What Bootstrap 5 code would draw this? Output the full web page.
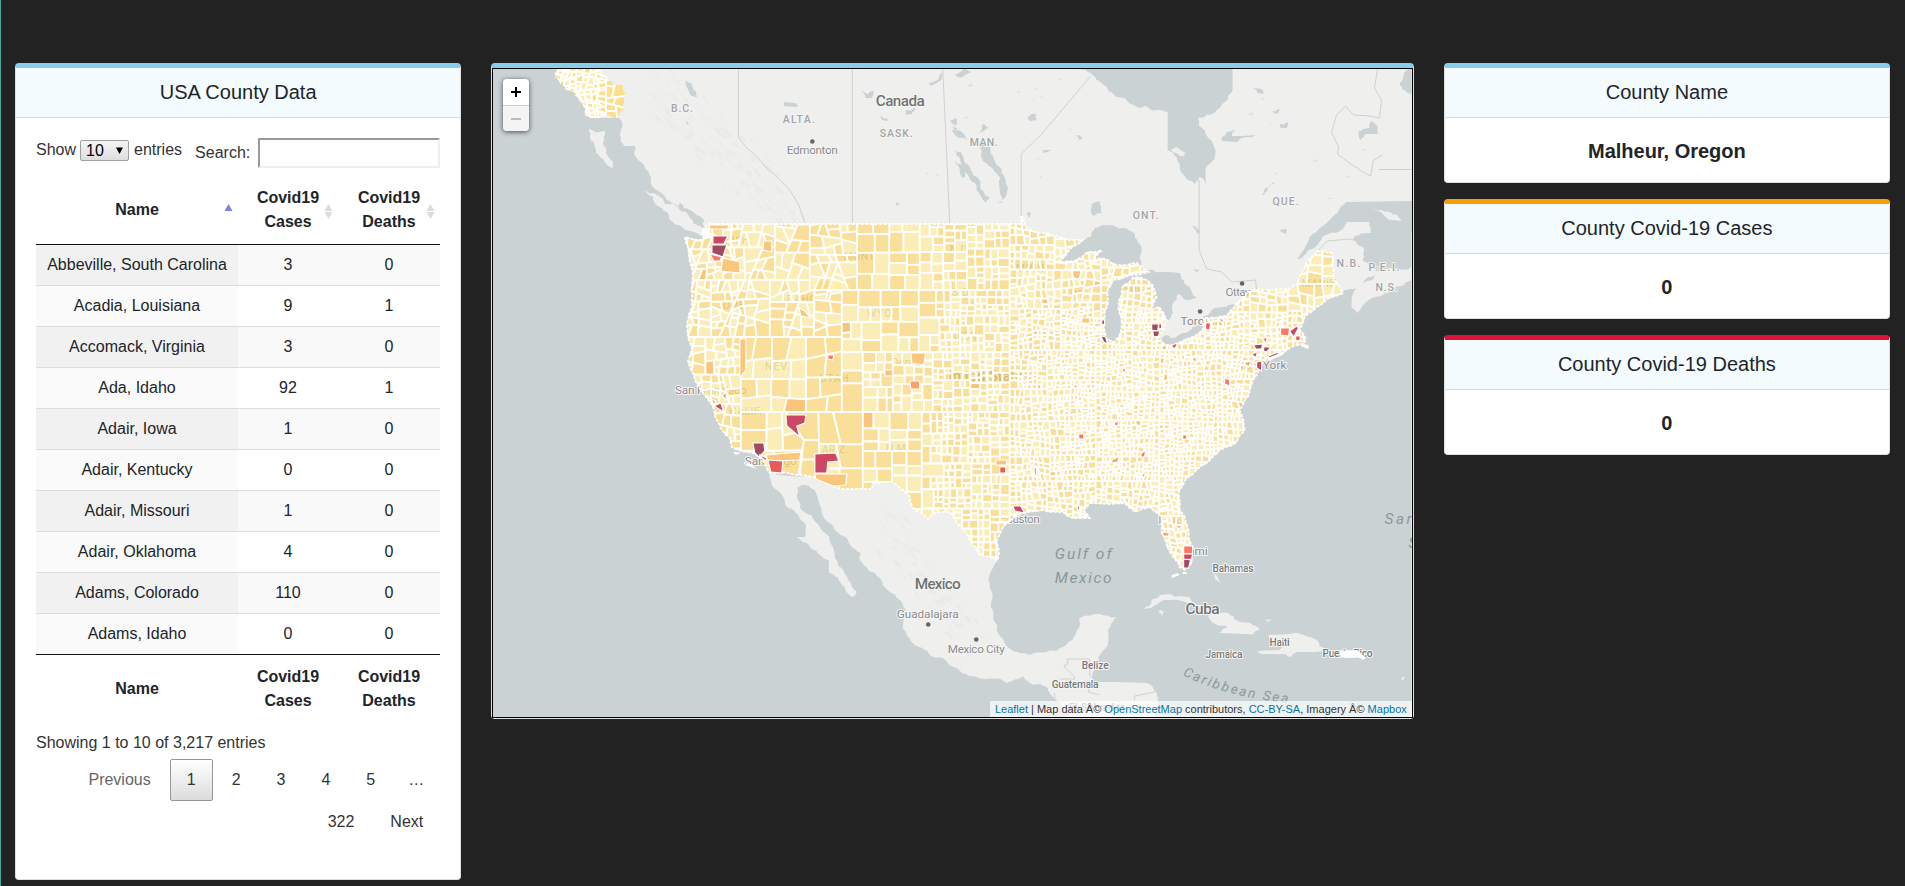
<!DOCTYPE html>
<html lang="en">
<head>
<meta charset="utf-8">
<meta name="viewport" content="width=device-width, initial-scale=1">
<title>USA County Data</title>
<link href="https://cdn.jsdelivr.net/npm/bootstrap@5.3.0/dist/css/bootstrap.min.css" rel="stylesheet">
<style>
  body{background:#222;font-family:"Liberation Sans",Arial,sans-serif;color:#212529;min-height:886px;border-left:1px solid #4aa293;overflow:hidden}
  .board{--bs-gutter-x:30px;margin-left:-1px;margin-right:0;padding-top:63px}
  .panel{--bs-card-border-radius:4px;--bs-card-inner-border-radius:3px;border:1px solid #dfdfdf;border-top:5px solid skyblue;background:#fff}
  .panel .card-header{background:#f4fbfe;border-bottom:1px solid #d9dcdd;padding:12px 20px}
  .panel .card-body{padding:20px}
  .panel-title{font-size:20px;line-height:25px;margin:0;font-weight:400}
  .panel-value{font-size:20px;line-height:24px;margin:0;font-weight:700}
  .panel .value-body{padding-top:21px;padding-bottom:19px}
  .cases-panel{border-top-color:#f59f00}
  .deaths-panel{border-top-color:#dc143c}
  .table-panel{height:817px}
  .tools{color:#333;height:38px}
  .len{width:49px;height:21px;border:1px solid #a0a0a0;border-radius:2px;background:linear-gradient(#f5f5f5,#dedede);padding:0 5px;line-height:19px;color:#000;margin:0 5px 0 4px}
  .len svg{margin-left:auto}
  .find{width:182px;height:30px;border:2px solid;border-color:#999 #eee #eee #999;border-radius:0;margin-left:8px;background:#fff}
  .county{table-layout:fixed;width:404px;border-collapse:separate;border-spacing:0;text-align:center;line-height:24px}
  .county th{padding:10px 18px;vertical-align:middle;position:relative}
  .county thead th{border-bottom:1px solid #111}
  .county tfoot th{border-top:1px solid #111;padding-bottom:6px}
  .county td{padding:8px 5px;border-top:1px solid #ddd;white-space:nowrap}
  .county tbody tr:first-child td{border-top:0}
  .county tbody tr:nth-child(odd) td{background:#f9f9f9}
  .county tbody tr td:first-child{background:#fafafa}
  .county tbody tr:nth-child(odd) td:first-child{background:#f1f1f1}
  .sorter{position:absolute;right:5px;top:27px}
  .info{padding-top:12px;line-height:24px;color:#333}
  .pager{padding-top:4px;line-height:24px}
  .pager span{padding:8px 16px;border:1px solid transparent;border-radius:2px;margin-left:2px;color:#333}
  .pager .off{color:#666}
  .pager .now{border-color:#979797;background:linear-gradient(#fff,#dcdcdc)}
  .pager .dots{padding:8px 16px;border-width:1px 0;margin-left:0}
  .map-panel{height:656px}
  .map-box{height:650px;border:1px solid #000;position:relative;overflow:hidden}
  .map-box>svg{display:block;width:100%;height:648px}
  .zoomer{position:absolute;left:10px;top:10px;width:26px;border-radius:4px;box-shadow:0 1px 5px rgba(0,0,0,.65);overflow:hidden}
  .zoomer div{height:26px;background:#fff;display:flex;align-items:center;justify-content:center}
  .zoomer div:last-child{background:#f4f4f4;border-top:1px solid #ccc}
  .credit{position:absolute;right:0;bottom:0;background:rgba(255,255,255,.7);padding:0 5px;font-size:11px;line-height:16px;color:#333;white-space:nowrap}
  .credit a{color:#0078a8;text-decoration:none}
  #labels text{font-family:Roboto,sans-serif;paint-order:stroke;stroke:#f5f5f4;stroke-width:2px;stroke-linejoin:round;fill:#8b8b8b}
  #labels .st{font-size:10.5px;font-weight:500;fill:#a4a4a4}
  #labels .nat{font-size:15.5px;font-weight:500;fill:#727272}
  #labels .sm{font-size:10.3px;fill:#777;font-weight:500}
  #labels .town{font-size:11.8px}
  #labels .sea{font-size:15.5px;font-style:italic;fill:#8a9999;stroke:none}
</style>
</head>
<body>
<div class="container-fluid p-0">
<div class="row board mt-0">
  <div class="col-3">
    <div class="card panel table-panel">
      <div class="card-header text-center"><h5 class="panel-title">USA County Data</h5></div>
      <div class="card-body">
        <div class="tools d-flex justify-content-between align-items-start">
          <label class="d-flex align-items-center">Show <span class="len d-inline-flex align-items-center">10<svg width="7" height="7" viewBox="0 0 7 7"><path d="M0 .5h7L3.5 7z"/></svg></span> entries</label>
          <label class="d-flex align-items-center">Search:<input type="search" class="find"></label>
        </div>
        <table class="county">
          <colgroup><col style="width:202px"><col style="width:100px"><col style="width:102px"></colgroup>
          <thead><tr>
            <th>Name<svg class="sorter" width="9" height="16"><path d="M.5 8L4.500 1 8.500 8z" fill="#8080df"/></svg></th>
            <th>Covid19 Cases<svg class="sorter" width="9" height="16"><path d="M.5 8L4.500 1 8.500 8zM.5 9H8.500L4.500 16z" fill="#dcdcdc"/></svg></th>
            <th>Covid19 Deaths<svg class="sorter" width="9" height="16"><path d="M.5 8L4.500 1 8.500 8zM.5 9H8.500L4.500 16z" fill="#dcdcdc"/></svg></th>
          </tr></thead>
          <tbody>
            <tr><td>Abbeville, South Carolina</td><td>3</td><td>0</td></tr>
            <tr><td>Acadia, Louisiana</td><td>9</td><td>1</td></tr>
            <tr><td>Accomack, Virginia</td><td>3</td><td>0</td></tr>
            <tr><td>Ada, Idaho</td><td>92</td><td>1</td></tr>
            <tr><td>Adair, Iowa</td><td>1</td><td>0</td></tr>
            <tr><td>Adair, Kentucky</td><td>0</td><td>0</td></tr>
            <tr><td>Adair, Missouri</td><td>1</td><td>0</td></tr>
            <tr><td>Adair, Oklahoma</td><td>4</td><td>0</td></tr>
            <tr><td>Adams, Colorado</td><td>110</td><td>0</td></tr>
            <tr><td>Adams, Idaho</td><td>0</td><td>0</td></tr>
          </tbody>
          <tfoot><tr><th>Name</th><th>Covid19 Cases</th><th>Covid19 Deaths</th></tr></tfoot>
        </table>
        <div class="info">Showing 1 to 10 of 3,217 entries</div>
        <div class="pager d-flex flex-wrap justify-content-end">
          <span class="off">Previous</span><span class="now">1</span><span>2</span><span>3</span><span>4</span><span>5</span><span class="dots">…</span><span>322</span><span>Next</span>
        </div>
      </div>
    </div>
  </div>
  <div class="col-6">
    <div class="card panel map-panel">
      <div class="map-box">
        <svg viewBox="493 69 919 648" preserveAspectRatio="none">
          <rect x="493" y="69" width="919" height="648" fill="#cad2d3"/>
          <g id="land" fill="#efefee"></g>
          <g id="relief" fill="#e8e8e7"></g>
          <g id="water" fill="#cad2d3"></g>
          <g id="usland" fill="#efefee"></g>
          <g fill="none" stroke="#d0d0d0" stroke-width="1">
            <path d="M738.500 69V137L745 146 755 155 765 166 777 177 790 190 799 205 805 223M852.500 69V223M943 69L950 223M1021.500 223V154L1042 134 1091 76"/>
            <path d="M1199.500 180V250L1207 269 1222 272 1232 282 1256 280 1257 291M1378 69L1375 88 1382 100 1380 118 1370 116 1354 115 1346 106 1337 115 1332 132 1339 147 1338 154 1350 163 1362 171 1371 176 1374 160 1383 155M1379 169.500H1412M1318 251L1328 241 1350 239 1354 240"/>
            <path d="M1085 245L1098 235 1139 260 1142 270 1165 285 1169 320M1159 338L1167 343 1184 334 1205 327M1207 318L1233 311"/>
            <path d="M1089 659H1068V664L1064 666 1075 677V679H1060M1090 659V675L1094 679M1089 685V692L1100 695M1135 700V696L1155 692M1055 693V700L1062 705"/>
          </g>
          <g id="labels">
            <text class="nat" x="876" y="106" textLength="49">Canada</text>
            <text class="st" x="671" y="112" textLength="22">B.C.</text>
            <text class="st" x="783" y="123" textLength="32">ALTA.</text>
            <text class="st" x="880" y="137" textLength="33">SASK.</text>
            <text class="town" x="787" y="154" textLength="51">Edmonton</text>
            <text class="st" x="970" y="146" textLength="28">MAN.</text>
            <text class="st" x="1133" y="219" textLength="26">ONT.</text>
            <text class="st" x="1273" y="205" textLength="26">QUE.</text>
            <text class="st" x="1337" y="267" textLength="24">N.B.</text>
            <text class="st" x="1369" y="271" textLength="31">P.E.I.</text>
            <text class="st" x="1376" y="291" textLength="22">N.S.</text>
            <text class="town" x="1226" y="296" textLength="34">Ottawa</text>
            <text class="town" x="1181" y="325" textLength="41">Toronto</text>
            <text class="town" x="1236" y="369" textLength="51">New York</text>
            <text class="town" x="675" y="394" textLength="72">San Francisco</text>
            <text class="town" x="745" y="465" textLength="52">San Diego</text>
            <text class="town" x="999" y="523" textLength="41">Houston</text>
            <text class="town" x="1176" y="555" textLength="32">Miami</text>
            <text class="st" x="1159" y="524" textLength="24">FLA.</text>
            <text class="st" x="720" y="244" textLength="32">WASH.</text>
            <text class="st" x="723" y="309" textLength="26">ORE.</text>
            <text class="st" x="783" y="303" textLength="34">IDAHO</text>
            <text class="st" x="844" y="260" textLength="33">MONT.</text>
            <text class="st" x="867" y="317" textLength="28">WYO.</text>
            <text class="st" x="765" y="370" textLength="25">NEV.</text>
            <text class="st" x="820" y="382" textLength="29">UTAH</text>
            <text class="st" x="730" y="415" textLength="32">CALIF.</text>
            <text class="st" x="822" y="453" textLength="26">ARIZ.</text>
            <text class="st" x="886" y="452" textLength="23">N.M.</text>
            <text class="st" x="950" y="253" textLength="20">N.D.</text>
            <text class="st" x="952" y="296" textLength="20">S.D.</text>
            <text class="st" x="1016" y="272" textLength="32">MINN.</text>
            <text class="st" x="1071" y="298" textLength="20">WIS.</text>
            <text class="st" x="1124" y="293" textLength="32">MICH.</text>
            <text class="st" x="1302" y="287" textLength="34">MAINE</text>
            <text class="st" x="950" y="340" textLength="30">NEBR.</text>
            <text class="st" x="1030" y="340" textLength="26">IOWA</text>
            <text class="town" x="891" y="366" textLength="35">Denver</text>
            <text class="nat" x="943" y="381" textLength="88">United States</text>
            <text class="nat" x="915" y="589" textLength="46">Mexico</text>
            <text class="town" x="897" y="618" textLength="62">Guadalajara</text>
            <text class="town" x="948" y="653" textLength="57">Mexico City</text>
            <text class="nat" x="1186" y="614" textLength="34">Cuba</text>
            <text class="sm" x="1213" y="572" textLength="41">Bahamas</text>
            <text class="sm" x="1270" y="646" textLength="20">Haiti</text>
            <text class="sm" x="1206" y="658" textLength="37">Jamaica</text>
            <text class="sm" x="1323" y="657" textLength="50">Puerto Rico</text>
            <text class="sm" x="1082" y="669" textLength="27">Belize</text>
            <text class="sm" x="1052" y="688" textLength="47">Guatemala</text>
            <text class="sm" x="1069" y="711" textLength="56">El Salvador</text>
            <text class="sea" x="1055" y="559" textLength="57">Gulf of</text>
            <text class="sea" x="1055" y="583" textLength="57">Mexico</text>
            <text class="sea" x="1385" y="524" textLength="80">Sargasso</text>
            <text class="sea" x="1409" y="548">Sea</text>
            <path id="seaway" d="M1183 675Q1225 697 1296 704" fill="none"/>
            <text class="sea" style="font-size:13.500px"><textPath href="#seaway" textLength="110">Caribbean Sea</textPath></text>
            <g fill="#666"><circle cx="812.500" cy="141.500" r="2.300"/><circle cx="1242.500" cy="283.500" r="2.300"/><circle cx="1200.500" cy="311.500" r="2.300"/><circle cx="928.500" cy="624.500" r="2.300"/><circle cx="976.500" cy="639.500" r="2.300"/></g>
          </g>
          <defs><clipPath id="usclip"></clipPath><clipPath id="akclip"></clipPath></defs>
          <g id="counties" clip-path="url(#usclip)" stroke="#fff" stroke-width="1.800" stroke-linejoin="round"></g>
          <g id="alaska" clip-path="url(#akclip)" stroke="#fff" stroke-width="1.900"></g>
          <g id="edges" fill="none" stroke="#fff" stroke-width="1.800" stroke-dasharray="3 1.500"></g>
          <g id="hot" stroke="#fff" stroke-width="1.200"></g>
          <g fill="#fff"><path d="M1340 651L1358 650 1362 654 1366 657 1364 660 1358 657 1350 658 1341 657zM733 452h4l4 1-5 2zM743 463l8 1 6 5-6-2zM1172 575l6-2 2 2-8 3zM1183 572h4v2h-4zM1303 344l6 1v4l-8-3zM1268 358l18-7-3 4-14 6zM702 229l8-2v10l-4 2-2-5z"/></g>
        </svg>
        <div class="zoomer">
          <div><svg width="10" height="10"><path d="M5 0V10M0 5H10" stroke="#000" stroke-width="2"/></svg></div>
          <div><svg width="10" height="10"><path d="M0 5H10" stroke="#bbb" stroke-width="2"/></svg></div>
        </div>
        <div class="credit"><a href="#">Leaflet</a> | Map data Â© <a href="#">OpenStreetMap</a> contributors, <a href="#">CC-BY-SA</a>, Imagery Â© <a href="#">Mapbox</a></div>
      </div>
    </div>
  </div>
  <div class="col-3 d-flex flex-column gap-3">
    <div class="card panel">
      <div class="card-header text-center"><h5 class="panel-title">County Name</h5></div>
      <div class="card-body value-body text-center flex-grow-0"><p class="panel-value">Malheur, Oregon</p></div>
    </div>
    <div class="card panel cases-panel">
      <div class="card-header text-center"><h5 class="panel-title">County Covid-19 Cases</h5></div>
      <div class="card-body value-body text-center flex-grow-0"><p class="panel-value">0</p></div>
    </div>
    <div class="card panel deaths-panel">
      <div class="card-header text-center"><h5 class="panel-title">County Covid-19 Deaths</h5></div>
      <div class="card-body value-body text-center flex-grow-0"><p class="panel-value">0</p></div>
    </div>
  </div>
</div>
</div>
<script src="https://cdn.jsdelivr.net/npm/bootstrap@5.3.0/dist/js/bootstrap.bundle.min.js"></script>
<script>
// Seeded generator keeps the coastlines and county mesh the same on each load
let seed = 20200412;
const rnd = () => { seed = (seed * 1664525 + 1013904223) >>> 0; return seed / 4294967296; };
const $ = id => document.getElementById(id);
const pts = s => { const n = s.trim().split(/[\s,]+/).map(Number), o = []; for (let i = 0; i < n.length; i += 2) o.push([n[i], n[i + 1]]); return o; };
const toPath = p => 'M' + p.map(q => q[0].toFixed(1) + ' ' + q[1].toFixed(1)).join('L') + 'Z';

// Midpoint displacement along every slanted coast segment
function rough(p, k) {
  for (let pass = 0; pass < 3; pass++) {
    const o = [];
    p.forEach((a, i) => {
      const b = p[(i + 1) % p.length], dx = b[0] - a[0], dy = b[1] - a[1], len = Math.hypot(dx, dy);
      o.push(a);
      if (len > 4 && dx && Math.abs(dy) > 1) { const d = (rnd() - .5) * k; o.push([(a[0] + b[0]) / 2 - dy * d, (a[1] + b[1]) / 2 + dx * d]); }
    });
    p = o;
  }
  return p;
}
const draw = (id, s, k = .35) => $(id).insertAdjacentHTML('beforeend', `<path d="${toPath(rough(pts(s), k))}"/>`);

const US = rough(pts(`708 224 1021 224 1021 217 1024 217 1027 228 1040 233 1055 236 1070 240 1083 240 1070 249 1059 262 1075 261 1088 252 1102 250 1095 258 1106 259 1117 265 1137 263 1149 272 1130 275 1113 280 1108 290 1105 317 1106 338 1115 342 1121 333 1122 323 1119 303 1123 287 1133 278 1140 277 1153 285 1157 297 1150 310 1160 307 1167 320 1162 333 1159 338 1165 345 1177 345 1203 330 1205 318 1227 316 1235 307 1247 293 1260 290 1290 289 1298 283 1307 263 1317 251 1332 253 1334 280 1343 293 1317 307 1305 317 1300 330 1306 338 1304 344 1290 348 1284 352 1266 360 1260 367 1253 382 1248 397 1240 410 1245 430 1237 442 1220 450 1207 463 1187 478 1179 493 1180 510 1188 527 1193 547 1192 563 1185 570 1180 567 1170 552 1162 533 1162 517 1150 507 1135 512 1125 503 1110 504 1090 503 1083 510 1090 518 1073 518 1063 512 1043 510 1023 513 1003 528 997 540 998 560 980 555 970 540 957 523 950 512 937 512 928 519 913 508 910 497 892 482 873 483 872 489 840 489 798 475 770 473 763 460 753 453 732 447 730 438 717 420 710 402 695 380 688 363 692 350 687 327 692 303 693 277 685 237 703 240 702 230`), .16);

// Canada with the Maritimes
draw('land', `540 69 558 69 570 85 580 102 592 117 606 118 619 118 620 135 624 146 635 146 636 157 645 168 652 186 664 195 672 203 690 212 704 226 800 260 1020 240 1100 280 1200 360 1290 300 1343 292 1362 287 1380 273 1370 267 1363 260 1365 247 1353 240 1372 233 1370 222 1347 222 1323 237 1300 259 1298 259 1317 232 1338 213 1347 202 1412 202 1412 69`);
draw('water', '1298 259 1317 232 1338 213 1347 202 1414 201 1414 225 1400 262 1380 270 1366 262 1364 248 1356 240 1372 233 1370 222 1347 222 1323 237 1302 258', .15);
draw('land', '1352 298 1373 280 1412 267 1412 280 1390 292 1358 313 1352 307');
draw('relief', '0 0 0 0 0 0');
draw('land', '589 129 605 131 603 143 606 153 613 168 604 160 595 147');
draw('land', '645 191 655 193 680 208 700 225 704 236 690 231 670 220 658 206');
// Mexico and Central America
draw('land', `770 473 785 500 788 508 806 525 805 537 797 537 812 549 829 560 829 572 845 587 853 597 857 592 848 580 838 565 834 550 820 527 800 508 798 487 806 485 815 490 820 505 828 522 846 537 861 553 860 560 880 578 900 600 906 613 903 628 912 642 930 655 950 665 977 677 1007 683 1023 676 1047 687 1057 700 1070 717 1156 717 1157 693 1147 683 1117 682 1093 682 1098 663 1102 652 1107 647 1108 630 1116 617 1100 614 1080 618 1073 640 1057 651 1030 655 1012 650 997 630 991 607 992 570 998 558 950 500 850 470`, .28);
draw('land', '1144 609 1152 600 1170 594 1190 597 1207 607 1220 613 1240 622 1260 630 1245 634 1220 633 1228 626 1212 622 1208 611 1186 602 1168 600 1154 606');
draw('land', '1160 610 1164 612 1162 616 1159 612');
draw('land', '1269 635 1290 634 1307 636 1320 646 1328 651 1315 652 1297 652 1291 657 1286 654 1262 654 1257 651 1280 650 1284 645 1272 640');
draw('land', '1210 652 1235 653 1240 658 1225 659');
draw('land', '1213 573 1218 576 1221 584 1215 579');draw('land', '1266 620 1272 619 1268 622');draw('land','1402 678 1405 676 1403 681');

// Soft terrain shading in the west and in Mexico
for (let i = 0; i < 190; i++) {
  const mex = i > 120, t = rnd();
  const x = mex ? 865 + t * 90 + rnd() * 25 : 625 + t * 150 + rnd() * 28, y = mex ? 515 + t * 130 + (rnd() - .5) * 45 : 75 + t * 130 + (rnd() - .5) * 60;
  if (!mex && x < 660 && y > 150) continue;
  $('relief').insertAdjacentHTML('beforeend', `<path opacity=".6" d="M${x} ${y}l${2 + rnd() * 4} ${3 + rnd() * 6} ${1 + rnd() * 5} ${rnd() * 4} -${2 + rnd() * 3} -${4 + rnd() * 3}z"/>`);
}

// Hudson Bay, lakes and sounds
[`1077 69 1093 75 1110 92 1125 98 1137 107 1168 112 1168 150 1180 168 1188 180 1195 184 1200 177 1206 184 1206 170 1211 163 1205 130 1198 118 1217 110 1228 100 1233 90 1233 69`,
 '1059 262 1070 249 1083 242 1095 228 1103 225 1125 228 1138 242 1142 263 1137 266 1117 268 1095 262 1075 266',
 '1106 345 1103 320 1106 290 1113 280 1130 275 1149 270 1180 273 1190 287 1197 297 1189 300 1178 294 1173 304 1169 320 1158 322 1145 316 1155 300 1150 288 1135 281 1124 290 1124 325 1118 345',
 '1157 339 1167 335 1185 333 1203 325 1205 331 1180 346 1165 347', '1204 316 1215 308 1233 304 1236 309 1228 318 1206 322',
 '977 144 990 146 997 165 1006 180 1007 195 1002 200 1000 188 994 170 984 162','955 150 964 158 973 175 981 182 990 198 986 203 980 195 970 178 964 170',
 '952 130 962 132 968 140 960 138','983 124 990 128 978 134','1092 205 1100 201 1102 213 1095 216 1091 212','1028 117 1036 114 1037 120 1030 121',
 '1262 196 1273 182 1275 184 1265 194','1222 138 1236 130 1232 136 1242 136 1257 135 1238 142 1222 141','1270 111 1281 109 1278 114','1280 124 1288 122 1287 128 1281 128','1359 131 1370 128 1372 121 1378 126 1378 134 1366 134 1361 140',
 '784 102 795 103 798 107 784 106','686 80 694 90 697 98 689 91','862 90 868 94 874 91 872 98 866 98','929 84 939 79 942 69 942 80 932 86','906 110 916 107 912 114 906 115','953 125 958 129 955 132','880 116 889 120 886 121','954 161 962 165 965 178 960 173','954 75 962 71 966 69 972 72 958 77',
 '1400 85 1404 75 1412 69 1412 94 1408 93','1252 88 1262 89 1264 94 1258 93','1192 226 1200 230 1199 234','1280 230 1287 229 1286 234','1076 135 1083 138 1080 140','1043 150 1051 150 1044 153','680 203 690 210 704 222 700 226 690 218 679 209','651 188 664 195 661 198 652 193','1193 269 1200 270 1197 272','896 202 900 204 897 206','685 121 689 123 688 125','950 121 957 118 957 126','1027 213 1031 212 1029 218','1024 232 1030 236'].forEach(s => draw('water', s, .4));
['1171 150 1178 147 1186 153 1184 156 1176 153', '1372 208 1390 212 1402 221 1385 216', '1373 264 1385 269 1398 268 1385 273'].forEach(s => draw('usland', s));
for (let i = 0; i < 30; i++) {
  const x = 925 + rnd() * 440, y = 74 + rnd() * 130;
  if (x > 1070 && x < 1240 && y < 190) continue;
  const s = 1 + rnd() * 1.4;
  $('water').insertAdjacentHTML('beforeend', `<path opacity=".6" d="M${x} ${y}l${s * 2} -${s} ${s * .5} ${s}z"/>`);
}

$('usland').insertAdjacentHTML('beforeend', `<path d="${toPath(US)}"/>`);
$('usclip').innerHTML = `<path d="${toPath(US)}"/>`;
$('edges').innerHTML = `<path d="${toPath(US)}"/>`;

// Split a convex polygon by the line through c with normal n
function split(poly, c, n) {
  const A = [], B = [];
  poly.forEach((p, i) => {
    const q = poly[(i + 1) % poly.length];
    const s = (p[0] - c[0]) * n[0] + (p[1] - c[1]) * n[1], t = (q[0] - c[0]) * n[0] + (q[1] - c[1]) * n[1];
    (s <= 0 ? A : B).push(p);
    if ((s < 0 && t > 0) || (s > 0 && t < 0)) { const k = s / (s - t), m = [p[0] + (q[0] - p[0]) * k, p[1] + (q[1] - p[1]) * k]; A.push(m); B.push(m); }
  });
  return [A, B];
}
// Typical county width by place: wide in the west, fine in the south-east
function size(x, y) {
  if (x < 735 && y < 337) return 10;
  if (x < 740) return 10;
  if (x < 863) return y > 410 ? 25 : y > 337 ? 20 : 13;
  if (x < 935) return y > 352 && y < 412 ? 11 : 14.5;
  if (x < 1010) return y < 300 ? 9 : 7.4;
  if (y < 310) return x > 1290 ? 12 : 7.8;
  if (x > 1235) return 6.2;
  if (y > 480) return 6.600;
  return x < 1060 ? 6.300 : 5.300;
}
function mesh(poly, out) {
  if (poly.length < 3) return;
  const xs = poly.map(p => p[0]), ys = poly.map(p => p[1]);
  const x0 = Math.min(...xs), x1 = Math.max(...xs), y0 = Math.min(...ys), y1 = Math.max(...ys);
  const w = x1 - x0, h = y1 - y0, cx = (x0 + x1) / 2, cy = (y0 + y1) / 2, s = size(cx, cy);
  if (Math.max(w, h) < s * (1.25 + rnd() * .35)) { out.push(poly); return; }
  const wild = cx < 850 && cy < 337;
  const t = wild ? .32 + rnd() * .36 : .4 + rnd() * .2, small = Math.max(w, h) < 60;
  const tilt = small && (cx > 1020 || cx < 850) ? (rnd() - .5) * (wild ? .9 : .5) : (rnd() - .5) * .03;
  const vertical = w * (0.85 + rnd() * .3) > h;
  const [a, b] = split(poly, [x0 + w * (vertical ? t : .5), y0 + h * (vertical ? .5 : t)], vertical ? [1, tilt] : [tilt, 1]);
  mesh(a, out); mesh(b, out);
}
const box = (a, b, c, d) => [[a, b], [c, b], [c, d], [a, d]];
const cells = [];
[box(680,216,775,280), box(680,280,770,337), box(775,216,810,280), box(770,280,842,337), box(810,216,920,290),
 box(842,290,919,352), box(806,337,842,412), box(842,352,863,412), box(680,337,741,480), box(741,337,806,412), [[741,412],[786,412],[804,440],[798,480],[741,480]], [[786,412],[863,412],[863,492],[798,492],[804,440]],
 box(863,352,933,412), box(863,412,922,492), box(919,290,1010,352), box(920,216,1010,290), box(933,352,1010,412), box(922,412,1010,575), box(863,492,922,525), box(1010,210,1350,350), box(1010,350,1350,575)
].forEach(s => mesh(s, cells));
const shade = ['#ffeda0', '#fed976', '#feb24c'];
$('counties').innerHTML = cells.map(p => {
  const r = rnd(), west = p[0][0] < 930;
  return `<path fill="${shade[r > (west ? .99 : .993) ? 2 : r > .5 ? 1 : 0]}" fill-opacity=".7" d="${toPath(p)}"/>`;
}).join('');

// Alaska panhandle
const ak = toPath(rough(pts('558 69 600 69 608 80 622 85 625 95 624 110 617 118 608 115 600 118 592 118 583 105 574 92'), .5));
$('akclip').innerHTML = `<path d="${ak}"/>`;
const akCells = []; const keep = size; size = () => 6; mesh(box(555, 66, 606, 122), akCells); size = () => 12; mesh(box(606, 80, 628, 122), akCells); size = keep;
$('alaska').innerHTML = akCells.map(p => `<path fill="${shade[rnd() > .7 || p[0][0] > 605 ? 1 : 0]}" fill-opacity=".8" d="${toPath(p)}"/>`).join('');

// Counties with high case counts
const tone = { a: '#fac57c', b: '#fba16c', c: '#fb7863', d: '#e85a5b', e: '#cc4763', f: '#a14862' };
[['e','713 236 728 236 724 244 713 244'],['f','712 245 727 245 723 257 712 253'],['c','710 254 722 257 720 261 714 261'],['a','723 258 740 262 740 273 721 271'],['a','709 225 729 225 728 229 710 229'],
 ['a','740 339 746 339 746 370 740 378'],['c','828 355 834 355 833 360 828 359'],['a','911 353 926 353 924 365 912 363'],['b','910 381 920 381 920 389 911 389'],['a','885 370 893 370 893 376 885 376'],['a','764 241 772 241 772 252 763 250'],['a','799 308 805 311 811 318 801 316'],
 ['e','786 415 806 415 805 423 797 426 800 437 787 426'],['f','753 443 764 443 765 451 759 457 755 453'],['d','760 455 767 458 766 461 761 457'],['a','766 455 801 452 800 460 768 461'],['d','768 460 783 461 782 473 771 472'],
 ['e','815 454 836 453 839 461 828 462 827 473 815 473'],['a','815 474 847 474 846 485 833 486 816 479'],['e','714 406 721 403 724 412'],['b','722 395 727 393 726 400'],['b','711 399 716 401 714 405'],
 ['e','1013 506 1021 506 1025 513 1015 511'],['d','1000 467 1006 467 1006 473 1000 473'],['a','996 460 1007 460 1007 465 996 465'],['c','1079 434 1084 434 1084 439 1079 439'],['c','1115 422 1119 422 1118 426 1115 425'],['c','1183 435 1187 435 1187 439 1183 439'],
 ['b','1112 460 1120 456 1118 462 1112 463'],['c','1184 546 1193 546 1193 554 1184 554'],['e','1184 554 1193 554 1192 559 1184 560'],['f','1184 559 1191 560 1189 568 1184 568'],['b','1162 532 1170 533 1169 536 1164 536'],['b','1174 525 1182 526 1180 529'],
 ['f','1152 324 1159 324 1158 331 1152 330'],['f','1153 331 1160 331 1159 336 1154 337'],['e','1159 324 1162 324 1162 329 1159 328'],['d','1206 323 1211 323 1210 330 1206 329'],['b','1218 319 1224 319 1223 323'],['d','1172 345 1178 343 1176 348 1173 348'],
 ['e','1102 320 1105 320 1105 325 1102 324'],['f','1101 336 1106 337 1108 344 1104 342'],['f','1254 345 1263 344 1262 349 1256 349'],['f','1264 347 1271 347 1267 352 1264 351'],['f','1269 356 1281 351 1276 357 1269 358'],['e','1257 362 1262 361 1262 371 1257 368'],['e','1252 354 1258 352 1256 358'],
 ['c','1281 328 1290 328 1289 336 1281 335'],['e','1290 331 1297 326 1299 328 1294 337'],['d','1296 336 1301 336 1300 341 1296 340'],['c','1263 338 1268 338 1266 344'],['b','1244 363 1252 361 1249 367'],['c','1142 474 1146 474 1144 478'],
 ['e','1122 369 1126 369 1125 373'],['c','1225 378 1230 380 1230 386 1225 384'],['c','1073 387 1078 384 1077 388'],['c','1141 454 1146 450 1145 456 1142 458'],['e','1077 505 1080 507 1079 513'],['b','1034 468 1037 468 1037 476 1035 475'],['a','1082 318 1090 318 1090 323 1082 323'],['b','1192 358 1197 358 1196 363']
].forEach(([t, s]) => $('hot').insertAdjacentHTML('beforeend', `<path fill="${tone[t]}" d="${toPath(pts(s))}"/>`));
</script>
</body>
</html>
